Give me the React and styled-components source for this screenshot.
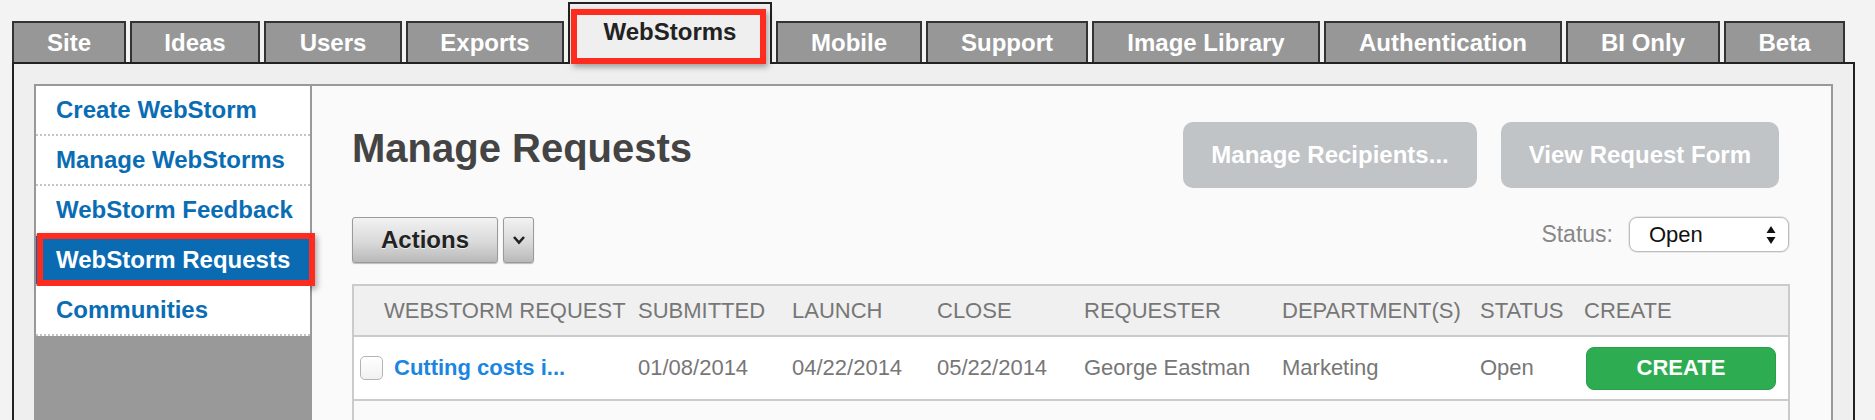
import React from "react";
import styled, { createGlobalStyle, css } from "styled-components";

const GlobalStyle = createGlobalStyle`
  html, body {
    margin: 0;
    padding: 0;
    overflow: hidden;
    background: #f3f3f3;
  }
  body {
    font-family: "Liberation Sans", Arial, Helvetica, sans-serif;
  }
  * { box-sizing: border-box; }
`;

const Page = styled.div`
  padding: 2px 20px 0 12px;
  height: 420px;
  overflow: hidden;
`;

const TabBar = styled.div`
  display: flex;
  align-items: flex-end;
  gap: 4px;
  margin-bottom: -2px;
  position: relative;
  z-index: 2;
`;

const Tab = styled.div`
  position: relative;
  display: flex;
  align-items: center;
  justify-content: center;
  width: ${(p) => p.$w}px;
  border: 2px solid #333;
  border-bottom: none;
  font-size: 24px;
  font-weight: bold;
  white-space: nowrap;
  ${(p) =>
    p.$active
      ? css`
          height: 62px;
          padding-bottom: 4px;
          background: #efefef;
          color: #222;
          border-color: #222;
        `
      : css`
          height: 41px;
          margin-bottom: 2px;
          background: #979797;
          color: #fff;
        `}
`;

const Highlight = styled.span`
  position: absolute;
  top: ${(p) => p.$top}px;
  left: ${(p) => p.$left}px;
  right: ${(p) => p.$right}px;
  bottom: ${(p) => p.$bottom}px;
  border: 6px solid #fe2c1e;
  box-shadow: 2px 3px 6px rgba(0, 0, 0, 0.35);
  pointer-events: none;
`;

const Panel = styled.div`
  border: 2px solid #222;
  border-bottom: none;
  background: #efefef;
  padding: 20px 20px 0 20px;
  height: 400px;
`;

const Frame = styled.div`
  display: flex;
  border: 2px solid #999;
  border-bottom: none;
  height: 100%;
`;

const Sidebar = styled.nav`
  width: 276px;
  flex: none;
  background: #999;
  border-right: 2px solid #999;
`;

const NavItem = styled.div`
  position: relative;
  height: 50px;
  display: flex;
  align-items: center;
  padding-left: 20px;
  border-bottom: 2px dotted #c4c4c4;
  font-size: 24px;
  font-weight: bold;
  white-space: nowrap;
  background: ${(p) => (p.$selected ? "#0a6bb2" : "#fff")};
  color: ${(p) => (p.$selected ? "#fff" : "#0a6db3")};
`;

const Main = styled.main`
  flex: 1;
  background: #fafafa;
  padding: 36px 41px 0 40px;
`;

const TopRow = styled.div`
  display: flex;
  align-items: center;
  justify-content: space-between;
  height: 66px;
`;

const Heading = styled.h1`
  margin: 0;
  padding-bottom: 14px;
  font-size: 40px;
  font-weight: bold;
  color: #444;
  line-height: 46px;
`;

const ButtonGroup = styled.div`
  display: flex;
  gap: 24px;
  margin-right: 11px;
`;

const GrayButton = styled.div`
  height: 66px;
  display: flex;
  align-items: center;
  padding: 0 28px;
  border-radius: 10px;
  background: #c0c4c7;
  color: #fff;
  font-size: 24px;
  font-weight: bold;
  white-space: nowrap;
`;

const ToolRow = styled.div`
  margin-top: 29px;
  display: flex;
  justify-content: space-between;
  align-items: flex-start;
  height: 46px;
`;

const ActionsGroup = styled.div`
  display: flex;
  gap: 5px;
`;

const BevelButton = styled.div`
  height: 46px;
  display: flex;
  align-items: center;
  justify-content: center;
  padding: ${(p) => (p.$icon ? "0" : "0 28px")};
  width: ${(p) => (p.$icon ? "31px" : "auto")};
  border: 1px solid #9a9a9a;
  border-radius: 3px;
  background: linear-gradient(#f2f2f2, #d9d9d9 55%, #b9b9b9);
  box-shadow: 0 1px 1px rgba(0, 0, 0, 0.25);
  color: #222;
  font-size: 24px;
  font-weight: bold;
  text-shadow: 0 1px 0 rgba(255, 255, 255, 0.7);
`;

const StatusFilter = styled.div`
  display: flex;
  align-items: center;
  gap: 16px;
  margin-right: 1px;
  height: 35px;
`;

const StatusLabel = styled.span`
  font-size: 23px;
  color: #888;
`;

const SelectBox = styled.div`
  width: 160px;
  height: 35px;
  display: flex;
  align-items: center;
  justify-content: space-between;
  padding: 0 12px 0 19px;
  background: #fff;
  border: 1px solid #bdbdbd;
  border-radius: 8px;
  box-shadow: 0 0 0 1px #e6e6e6;
  font-size: 22px;
  color: #111;
`;

const Table = styled.div`
  margin-top: 21px;
  border: 2px solid #cbcbcb;
  border-bottom: none;
`;

const columns = "284px 154px 145px 147px 198px 198px 104px 1fr";

const HeaderRow = styled.div`
  display: grid;
  grid-template-columns: ${columns};
  align-items: center;
  height: 51px;
  background: #f0f0f0;
  border-bottom: 2px solid #cbcbcb;
`;

const HeaderCell = styled.div`
  font-size: 22px;
  color: #777;
  text-transform: uppercase;
  white-space: nowrap;
  padding-left: ${(p) => p.$indent || 0}px;
`;

const BodyRow = styled.div`
  display: grid;
  grid-template-columns: ${columns};
  align-items: center;
  height: ${(p) => (p.$empty ? "60px" : "64px")};
  background: ${(p) => (p.$empty ? "#fafafa" : "#fff")};
  border-bottom: ${(p) => (p.$empty ? "none" : "2px solid #cbcbcb")};
`;

const BodyCell = styled.div`
  display: flex;
  align-items: center;
  gap: 11px;
  font-size: 22px;
  color: #777;
  white-space: nowrap;
  padding-left: ${(p) => p.$indent || 0}px;
`;

const Checkbox = styled.span`
  width: 23px;
  height: 24px;
  border: 1px solid #b3b3b3;
  border-radius: 5px;
  background: linear-gradient(#fff, #f1f1f1);
`;

const RequestLink = styled.span`
  color: #1a86df;
  font-weight: bold;
`;

const CreateButton = styled.div`
  width: 190px;
  height: 43px;
  margin-left: 2px;
  display: flex;
  align-items: center;
  justify-content: center;
  background: #2eac52;
  border: 1px solid #28a04a;
  border-radius: 8px;
  color: #fff;
  font-size: 22px;
  font-weight: bold;
`;

const tabs = [
  ["Site", 114],
  ["Ideas", 130],
  ["Users", 138],
  ["Exports", 158],
  ["WebStorms", 204],
  ["Mobile", 146],
  ["Support", 162],
  ["Image Library", 228],
  ["Authentication", 238],
  ["BI Only", 154],
  ["Beta", 121],
];

const navItems = [
  "Create WebStorm",
  "Manage WebStorms",
  "WebStorm Feedback",
  "WebStorm Requests",
  "Communities",
];

const headers = [
  "WebStorm Request",
  "Submitted",
  "Launch",
  "Close",
  "Requester",
  "Department(s)",
  "Status",
  "Create",
];

const Chevron = () => (
  <svg width="14" height="10" viewBox="0 0 14 10">
    <polyline
      points="2,2 7,7.5 12,2"
      fill="none"
      stroke="#222"
      strokeWidth="2.6"
    />
  </svg>
);

const UpDown = () => (
  <svg width="10" height="20" viewBox="0 0 10 20">
    <polygon points="5,1 9.5,8 0.5,8" fill="#111" />
    <polygon points="0.5,12 9.5,12 5,19" fill="#111" />
  </svg>
);

export default function App() {
  return (
    <>
      <GlobalStyle />
      <Page>
        <TabBar>
          {tabs.map(([t, w]) => (
            <Tab key={t} $w={w} $active={t === "WebStorms"}>
              {t}
              {t === "WebStorms" && (
                <Highlight $top={5} $left={1} $right={4} $bottom={0} />
              )}
            </Tab>
          ))}
        </TabBar>
        <Panel>
          <Frame>
            <Sidebar>
              {navItems.map((n) => (
                <NavItem key={n} $selected={n === "WebStorm Requests"}>
                  {n}
                  {n === "WebStorm Requests" && (
                    <Highlight $top={-3} $left={1} $right={-5} $bottom={-2} />
                  )}
                </NavItem>
              ))}
            </Sidebar>
            <Main>
              <TopRow>
                <Heading>Manage Requests</Heading>
                <ButtonGroup>
                  <GrayButton>Manage Recipients...</GrayButton>
                  <GrayButton>View Request Form</GrayButton>
                </ButtonGroup>
              </TopRow>
              <ToolRow>
                <ActionsGroup>
                  <BevelButton>Actions</BevelButton>
                  <BevelButton $icon>
                    <Chevron />
                  </BevelButton>
                </ActionsGroup>
                <StatusFilter>
                  <StatusLabel>Status:</StatusLabel>
                  <SelectBox>
                    <span>Open</span>
                    <UpDown />
                  </SelectBox>
                </StatusFilter>
              </ToolRow>
              <Table>
                <HeaderRow>
                  {headers.map((h, i) => (
                    <HeaderCell key={h} $indent={i === 0 ? 30 : 0}>
                      {h}
                    </HeaderCell>
                  ))}
                </HeaderRow>
                <BodyRow>
                  <BodyCell $indent={6}>
                    <Checkbox />
                    <RequestLink>Cutting costs i...</RequestLink>
                  </BodyCell>
                  <BodyCell>01/08/2014</BodyCell>
                  <BodyCell>04/22/2014</BodyCell>
                  <BodyCell>05/22/2014</BodyCell>
                  <BodyCell>George Eastman</BodyCell>
                  <BodyCell>Marketing</BodyCell>
                  <BodyCell>Open</BodyCell>
                  <BodyCell>
                    <CreateButton>CREATE</CreateButton>
                  </BodyCell>
                </BodyRow>
                <BodyRow $empty />
              </Table>
            </Main>
          </Frame>
        </Panel>
      </Page>
    </>
  );
}
